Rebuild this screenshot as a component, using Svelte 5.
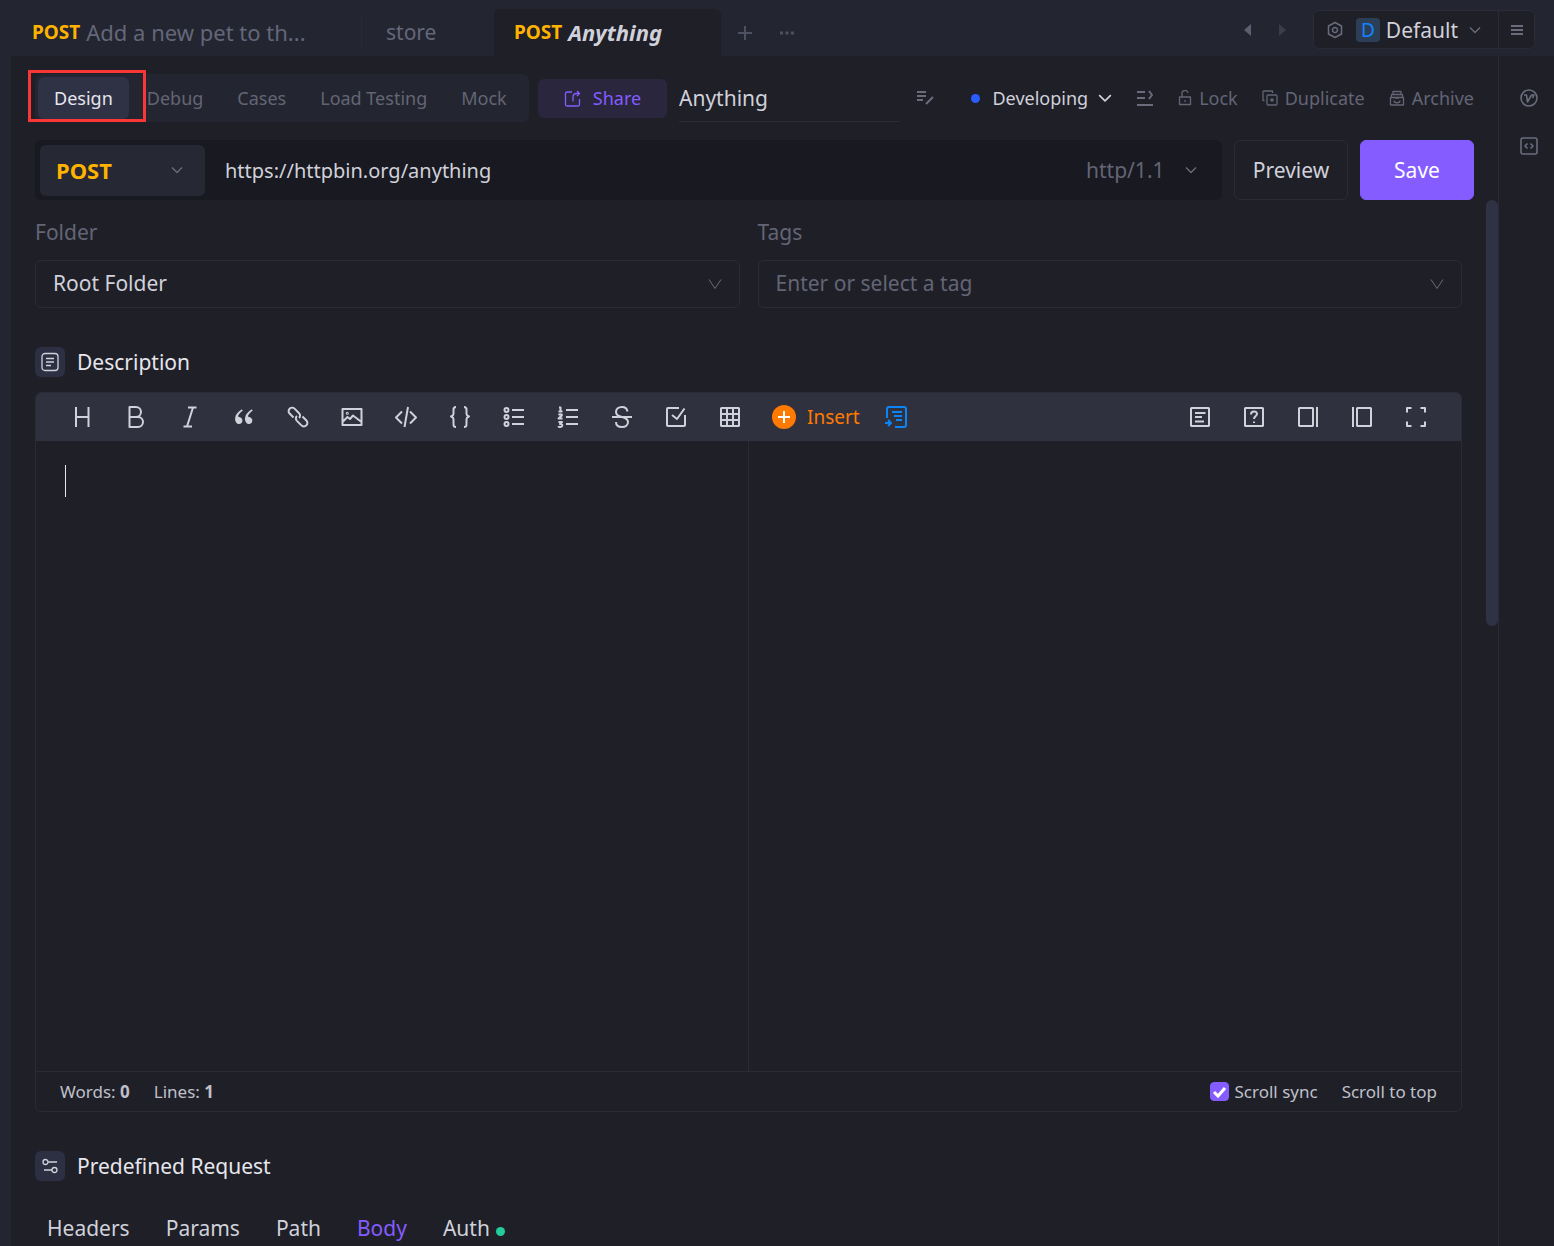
<script lang="ts">
	type Tool = { name: string; d: string; fill?: string };

	const modes = ['Design', 'Debug', 'Cases', 'Load Testing', 'Mock'];
	const requestTabs = ['Headers', 'Params', 'Path', 'Body', 'Auth'];

	let mode = $state('Design');
	let requestTab = $state('Body');
	let title = $state('Anything');
	let url = $state('https://httpbin.org/anything');
	let description = $state('');
	let scrollSync = $state(true);

	let words = $derived(description.trim() ? description.trim().split(/\s+/).length : 0);
	let lines = $derived(description.split('\n').length);

	const tools: Tool[] = [
		{ name: 'Heading', d: 'M12 4v40M37 4v40M12 24h25' },
		{
			name: 'Bold',
			d: 'M24 24c5.5 0 10-4.5 10-10S29.5 4 24 4H11v20h13ZM28 44c5.5 0 10-4.5 10-10s-4.5-10-10-10H11v20h17Z'
		},
		{ name: 'Italic', d: 'M20 5h17M11 43h17M30 5 18 43' },
		{
			name: 'Quote',
			d: '',
			fill: 'M18.9 9.1C11.3 13.9 7.1 19.6 6.3 26 5 36 13.9 40.9 18.5 36.5 23 32.1 20.3 26.5 17 25c-3.3-1.5-5.3-1-4.9-3 .3-2 5-7.7 9.1-10.4a.7.7 0 0 0 .1-1L20.3 9.3c-.4-.6-.9-.6-1.4-.2ZM38.7 9.1C31.1 13.9 27 19.6 26.1 26c-1.3 10 7.6 14.9 12.2 10.5C42.8 32.1 40.1 26.5 36.8 25c-3.3-1.5-5.3-1-4.9-3 .3-2 5-7.7 9.1-10.4a.7.7 0 0 0 .1-1L40.1 9.3c-.4-.6-.8-.6-1.4-.2Z'
		},
		{
			name: 'Link',
			d: 'm26.2 16.4-9.1-9.2c-2.7-2.6-7.1-2.6-9.8.2-2.7 2.7-2.8 7.1-.1 9.7l7.9 8M32.9 23l7.9 7.9c2.7 2.7 2.6 7.1-.1 9.8-2.7 2.7-7.1 2.8-9.8.1l-9.1-9.1M26.1 26.1c2.7-2.7 2.8-7.1.1-9.7M21.8 21.8c-2.7 2.7-2.8 7.1-.1 9.8'
		},
		{
			name: 'Image',
			d: 'M5 8h38v32H5ZM13.5 16.5a1 1 0 1 0 2 0 1 1 0 1 0-2 0M5 34l10-10 5 4 6-7 17 13'
		},
		{ name: 'Code', d: 'M16 13 4 25 16 37M32 13l12 12-12 12M28 4l-7 40' },
		{
			name: 'Code block',
			d: 'M16 4c-2 0-5 1-5 5v9c0 3-5 5-5 5s5 2 5 5v11c0 4 3 5 5 5M32 4c2 0 5 1 5 5v9c0 3 5 5 5 5s-5 2-5 5v11c0 4-3 5-5 5'
		},
		{
			name: 'Unordered list',
			d: 'M5 10a4 4 0 1 0 8 0 4 4 0 1 0-8 0M5 24a4 4 0 1 0 8 0 4 4 0 1 0-8 0M5 38a4 4 0 1 0 8 0 4 4 0 1 0-8 0M20 10h24M20 24h24M20 38h24'
		},
		{
			name: 'Ordered list',
			d: 'M6 5h3v8M5 13h8M5 20c2-2 7-2 7 0 0 3-6 4-7 7h8M5 34h7l-4 4c7 0 5 6 1 6-2 0-4-1-4-2M20 10h24M20 24h24M20 38h24'
		},
		{
			name: 'Strikethrough',
			d: 'M4 24h40M35 13c-1-6-5-9-11-9-7 0-12 4-12 10 0 5 3 8 12 10 8 2 12 5 12 10 0 6-5 10-12 10-8 0-12-4-12-10'
		},
		{ name: 'Task list', d: 'M42 20v20a2 2 0 0 1-2 2H8a2 2 0 0 1-2-2V8a2 2 0 0 1 2-2h22M16 20l10 8L41 7' },
		{ name: 'Table', d: 'M7 6h34l1 1v34l-1 1H7l-1-1V7ZM6 18h36M6 30h36M18 6v36M30 6v36' }
	];

	const viewTools: Tool[] = [
		{ name: 'Table of contents', d: 'M7 6h34l1 1v34l-1 1H7l-1-1V7ZM14 16h21M14 24h14M14 33h18' },
		{
			name: 'Help',
			d: 'M7 6h34l1 1v34l-1 1H7l-1-1V7ZM18 19c0-8 12-8 12-1 0 4-6 4-6 10M24 33v3'
		},
		{ name: 'Write only', d: 'M7 6h26l1 1v34l-1 1H7l-1-1V7ZM42 4v40' },
		{ name: 'Preview only', d: 'M15 6h26l1 1v34l-1 1H15l-1-1V7ZM6 4v40' },
		{ name: 'Fullscreen', d: 'M33 6h9v9M42 33v9h-9M15 42H6v-9M6 15V6h9' }
	];
</script>

{#snippet chevron(size: number)}
	<svg class="chevron" width={size} height={size} viewBox="0 0 12 12" stroke-width="1.4" aria-hidden="true">
		<path d="M1 3.5 6 8.5 11 3.5" />
	</svg>
{/snippet}

{#snippet caret()}
	<svg class="chevron" width="14" height="14" viewBox="0 0 14 14" aria-hidden="true">
		<path d="M1 2.5 7 11.5 13 2.5" />
	</svg>
{/snippet}

{#snippet tool(item: Tool)}
	<button class="tool" aria-label={item.name} title={item.name}>
		<svg width="24" height="24" viewBox="0 0 48 48" stroke-width="4">
			<path d={item.d} />
			{#if item.fill}
				<path class="solid" d={item.fill} />
			{/if}
		</svg>
	</button>
{/snippet}

<div class="app">
	<header>
		<nav class="file-tabs" aria-label="Open tabs">
			<button class="file-tab first"><b class="post">POST</b> Add a new pet to th...</button>
			<button class="file-tab store">store</button>
			<button class="file-tab current"><b class="post">POST</b> <b class="name">Anything</b></button>
			<div class="tab-tools">
				<button aria-label="New tab">
					<svg width="16" height="16" viewBox="0 0 16 16" stroke-width="2"><path d="M8 1v14M1 8h14" /></svg>
				</button>
				<button aria-label="More">
					<svg width="16" height="16" viewBox="0 0 16 16">
						<path class="solid" d="M1 6.5h3v3H1zM6.5 6.5h3v3h-3zM12 6.5h3v3h-3z" />
					</svg>
				</button>
			</div>
		</nav>
		<div class="history">
			<button aria-label="Back">
				<svg width="10" height="14" viewBox="0 0 10 14"><path class="solid" d="M1 7 8 1v12z" /></svg>
			</button>
			<button aria-label="Forward" disabled>
				<svg width="10" height="14" viewBox="0 0 10 14"><path class="solid" d="M9 7 2 1v12z" /></svg>
			</button>
		</div>
		<div class="environment">
			<button class="env-name">
				<svg width="18" height="18" viewBox="0 0 18 18" stroke-width="1.5"><path d="M9 1.5l6.5 3.5v8L9 16.500 2.500 13V5ZM6.500 9a2.500 2.500 0 1 0 5 0 2.500 2.500 0 1 0-5 0" /></svg>
				<span class="badge">D</span>
				<span>Default</span>
				{@render chevron(12)}
			</button>
			<button class="env-menu" aria-label="Environments">
				<svg width="12" height="12" viewBox="0 0 12 12" stroke-width="2"><path d="M0 2h12M0 6h12M0 10h12" /></svg>
			</button>
		</div>
	</header>

	<div class="workspace">
		<main>
			<div class="action-row">
				<div class="modes">
					{#each modes as item}
						<button class="mode" class:active={mode === item} onclick={() => (mode = item)}>{item}</button>
					{/each}
					<span class="highlight"></span>
				</div>
				<button class="share">
					<svg width="17" height="17" viewBox="0 0 17 17" stroke-width="1.3">
						<path d="M8 2H3a1.500 1.500 0 0 0-1.500 1.500v11A1.500 1.500 0 0 0 3 16h11a1.500 1.500 0 0 0 1.500-1.500V9M13 1l2.500 2.500L13 6M15 3.500h-2.500C10 3.500 9 5.500 9 7.500v4" />
					</svg>
					Share
				</button>
				<input class="title" aria-label="Name" bind:value={title} />
				<button class="icon edit" aria-label="Edit name">
					<svg width="20" height="16" viewBox="0 0 20 16" stroke-width="2"><path d="M2 2h9M2 6h9M2 10h6M18 7l-7 7" /></svg>
				</button>
				<div class="status-actions">
					<button class="status"><span class="dot"></span>Developing {@render chevron(14)}</button>
					<button class="icon" aria-label="Outline">
						<svg width="18" height="16" viewBox="0 0 18 16" stroke-width="2"><path d="M1 2h8M1 8h8M1 15h16M13 1l3 4-3 4" /></svg>
					</button>
					<button class="action">
						<svg width="14" height="16" viewBox="0 0 14 16" stroke-width="1.3"><path d="M1.500 7h11v7.500h-11zM4 7V4a3 3 0 0 1 6-1M7 10v2" /></svg>
						Lock
					</button>
					<button class="action">
						<svg width="16" height="16" viewBox="0 0 16 16" stroke-width="1.3"><path d="M6 5h8a1 1 0 0 1 1 1v8a1 1 0 0 1-1 1H6a1 1 0 0 1-1-1V6a1 1 0 0 1 1-1ZM2.500 10.500H1V2a1 1 0 0 1 1-1h8.500v2M10 8v4M8 10h4" /></svg>
						Duplicate
					</button>
					<button class="action">
						<svg width="16" height="16" viewBox="0 0 16 16" stroke-width="1.3"><path d="M1.500 7.500h13V15h-13ZM2.500 7V4.500h11V7M4 4V1.500h8V4M5 10.500c0 3 6 3 6 0M6 8h4" /></svg>
						Archive
					</button>
				</div>
			</div>

			<div class="url-row">
				<div class="url-box">
					<div class="picker method">
						<select aria-label="Method">
							<option>POST</option>
							<option>GET</option>
						</select>
						{@render chevron(12)}
					</div>
					<input class="url" aria-label="URL" bind:value={url} />
					<div class="picker protocol">
						<select aria-label="Protocol">
							<option>http/1.1</option>
							<option>http/2</option>
						</select>
						{@render chevron(12)}
					</div>
				</div>
				<button class="preview">Preview</button>
				<button class="save">Save</button>
			</div>

			<div class="scroller">
				<div class="content">
					<div class="fields">
						<div class="field">
							<label for="folder">Folder</label>
							<div class="picker boxed">
								<select id="folder"><option>Root Folder</option></select>
								{@render caret()}
							</div>
						</div>
						<div class="field">
							<label for="tags">Tags</label>
							<div class="picker boxed">
								<input id="tags" placeholder="Enter or select a tag" />
								{@render caret()}
							</div>
						</div>
					</div>

					<h2>
						<span class="heading-icon">
							<svg width="18" height="20" viewBox="0 0 18 20" stroke-width="1.3"><path d="M4 1.500h10a3 3 0 0 1 3 3v11a3 3 0 0 1-3 3H4a3 3 0 0 1-3-3v-11a3 3 0 0 1 3-3ZM5 6.500h8M5 10h8M5 13.500h5" /></svg>
						</span>
						Description
					</h2>

					<section class="editor">
						<div class="toolbar">
							{#each tools as item}
								{@render tool(item)}
							{/each}
							<button class="insert">
								<svg width="24" height="24" viewBox="0 0 24 24" stroke-width="2">
									<circle cx="12" cy="12" r="12" />
									<path d="M12 6v12M6 12h12" />
								</svg>
								Insert
							</button>
							<button class="tool format" aria-label="Format">
								<svg width="24" height="24" viewBox="0 0 24 24" stroke-width="2">
									<path d="M3 13V4a2 2 0 0 1 2-2h15a2 2 0 0 1 2 2v16a2 2 0 0 1-2 2h-9M8 7h10M10 11h8M12 15h6M1 18h6M4 15l3 3-3 3" />
								</svg>
							</button>
							<div class="view-tools">
								{#each viewTools as item}
									{@render tool(item)}
								{/each}
							</div>
						</div>
						<div class="panes">
							<div class="pane">
								<textarea aria-label="Description" bind:value={description}></textarea>
								<span class="caret"></span>
							</div>
							<div class="pane"></div>
						</div>
						<footer>
							<span>Words: <b>{words}</b></span>
							<span>Lines: <b>{lines}</b></span>
							<label class="sync"><input type="checkbox" bind:checked={scrollSync} />Scroll sync</label>
							<button>Scroll to top</button>
						</footer>
					</section>

					<h2>
						<span class="heading-icon">
							<svg width="16" height="16" viewBox="0 0 16 16" stroke-width="1.3"><path d="M1 4a2.500 2.500 0 1 0 5 0 2.500 2.500 0 1 0-5 0M6 4h9M10 12a2.500 2.500 0 1 0 5 0 2.500 2.500 0 1 0-5 0M10 12H2" /></svg>
						</span>
						Predefined Request
					</h2>

					<nav class="request-tabs">
						{#each requestTabs as item}
							<button class:active={requestTab === item} onclick={() => (requestTab = item)}>
								{item}
								{#if item === 'Auth'}<span class="dot"></span>{/if}
							</button>
						{/each}
					</nav>
				</div>
				<div class="scrollbar"></div>
			</div>
		</main>

		<aside>
			<button class="icon" aria-label="Validate">
				<svg width="20" height="20" viewBox="0 0 20 20" stroke-width="1.6"><circle cx="10" cy="10" r="8" /><path d="M5 7h2.500l1 7 4-7H15l-1.500 3" /></svg>
			</button>
			<button class="icon" aria-label="Generate code">
				<svg width="20" height="20" viewBox="0 0 20 20" stroke-width="1.6"><rect x="2" y="2" width="16" height="16" rx="2" /><path d="M8.500 7.500 6 10l2.500 2.500M11.500 7.500 14 10l-2.500 2.500" /></svg>
			</button>
		</aside>
	</div>
</div>

<style>
	:global(body) {
		margin: 0;
		background: #1f1f28;
	}

	.app {
		--bar: #232530;
		--panel: #1f1f28;
		--line: #2a2b37;
		--text: #d0d1da;
		--muted: #636575;
		--raised: #2f3144;
		--purple: #845cff;
		--post: #ffb300;
		display: flex;
		flex-direction: column;
		height: 100vh;
		overflow: hidden;
		background: var(--bar);
		color: var(--text);
		font-family: 'Noto Sans', 'Open Sans', sans-serif;
		font-size: 21px;
		line-height: 30px;
	}

	.app :global(*) {
		box-sizing: border-box;
	}

	button,
	input,
	select,
	textarea {
		margin: 0;
		padding: 0;
		border: 0;
		outline: 0;
		background: none;
		color: inherit;
		font: inherit;
		white-space: nowrap;
	}

	button {
		display: flex;
		align-items: center;
		cursor: pointer;
	}

	svg {
		flex: none;
		fill: none;
		stroke: currentColor;
		stroke-linejoin: round;
	}

	.solid {
		fill: currentColor;
		stroke: none;
	}

	header {
		display: flex;
		flex: none;
		align-items: center;
		height: 56px;
		padding: 3px 19px 0 0;
	}

	.file-tabs {
		display: flex;
		align-items: center;
		align-self: flex-end;
		height: 47px;
		color: #64677a;
		font-size: 22px;
	}

	.file-tab {
		height: 47px;
		gap: 6px;
		padding-bottom: 2px;
	}

	.first {
		width: 362px;
		padding-left: 32px;
		background: linear-gradient(var(--line), var(--line)) right center / 1px 32px no-repeat;
	}

	.store {
		width: 132px;
		padding-left: 24px;
		font-size: 21px;
	}

	.current {
		width: 227px;
		padding-left: 20px;
		border-radius: 6px 6px 0 0;
		background: var(--panel);
		color: var(--text);
	}

	.post {
		color: var(--post);
		font-size: 19px;
	}

	.name {
		font-style: italic;
	}

	.tab-tools {
		display: flex;
		gap: 26px;
		padding-left: 16px;
		color: #4d5061;
	}

	.history {
		display: flex;
		gap: 24px;
		margin: 0 26px 0 auto;
		color: #5d5f70;
	}

	.history button:disabled {
		color: #3b3d4b;
	}

	.environment {
		display: flex;
		height: 39px;
		border: 1px solid var(--line);
		border-radius: 6px;
		background: var(--panel);
	}

	.env-name {
		gap: 6px;
		padding: 0 17px 0 12px;
	}

	.env-name svg,
	.env-menu {
		color: #6a6c7c;
	}

	.badge {
		width: 24px;
		height: 24px;
		margin-left: 6px;
		border-radius: 4px;
		background: #2d3f56;
		color: #1283ff;
		font-size: 19px;
		line-height: 24px;
	}

	.env-name .chevron {
		margin-left: 5px;
	}

	.env-menu {
		width: 36px;
		justify-content: center;
		border-left: 1px solid var(--line);
	}

	.workspace {
		display: flex;
		flex: 1;
		min-height: 0;
		padding-left: 11px;
	}

	main {
		display: flex;
		flex: 1;
		flex-direction: column;
		min-width: 0;
		padding: 18px 0 0 24px;
		background: var(--panel);
	}

	aside {
		display: flex;
		flex: none;
		flex-direction: column;
		align-items: center;
		gap: 28px;
		width: 56px;
		padding: 32px 0 0 4px;
		border-left: 1px solid var(--line);
		background: var(--panel);
	}

	.icon {
		color: #6a6c7c;
	}

	.action-row {
		display: flex;
		align-items: center;
		height: 48px;
		padding-right: 24px;
		font-size: 18px;
	}

	.modes {
		position: relative;
		display: flex;
		gap: 2px;
		align-items: center;
		width: 494px;
		height: 48px;
		padding: 3px;
		border-radius: 6px;
		background: var(--bar);
		color: var(--muted);
	}

	.mode {
		height: 42px;
		padding: 0 16px;
		border-radius: 6px;
	}

	.mode.active {
		background: var(--raised);
		color: #e6e6ec;
	}

	.highlight {
		position: absolute;
		top: -4px;
		left: -7px;
		width: 118px;
		height: 52px;
		border: 3px solid #fb3636;
		pointer-events: none;
	}

	.share {
		justify-content: center;
		gap: 12px;
		width: 129px;
		height: 39px;
		margin-left: 9px;
		border-radius: 6px;
		background: #29263e;
		color: var(--purple);
	}

	.title {
		width: 221px;
		height: 48px;
		margin-left: 12px;
		border-bottom: 1px solid var(--line);
		font-size: 21px;
	}

	.edit {
		margin-left: 15px;
	}

	.status-actions {
		display: flex;
		align-items: center;
		gap: 24px;
		margin-left: auto;
	}

	.status {
		gap: 10px;
		color: var(--text);
	}

	.dot {
		width: 9px;
		height: 9px;
		border-radius: 50%;
		background: #2b5cff;
	}

	.status .dot {
		margin-right: 2px;
	}

	.action {
		gap: 7px;
		color: var(--muted);
	}

	.url-row {
		display: flex;
		flex: none;
		gap: 12px;
		height: 60px;
		margin-top: 18px;
		padding-right: 24px;
	}

	.url-box {
		display: flex;
		flex: 1;
		align-items: center;
		min-width: 0;
		padding: 0 5px;
		border-radius: 6px;
		background: #191921;
	}

	.url {
		flex: 1;
		min-width: 0;
		height: 50px;
		padding-left: 20px;
		font-size: 20px;
	}

	.picker {
		position: relative;
		display: flex;
		align-items: center;
	}

	.picker select {
		width: 100%;
		height: 100%;
		appearance: none;
	}

	.picker .chevron {
		position: absolute;
		right: 17px;
		color: #6a6c7c;
		pointer-events: none;
	}

	.method {
		width: 165px;
		height: 51px;
		border-radius: 6px;
		background: #262833;
		color: var(--post);
		font-size: 22px;
		font-weight: 700;
	}

	.method select {
		padding-left: 16px;
	}

	.method .chevron {
		right: 22px;
	}

	.protocol {
		width: 131px;
		height: 50px;
		color: var(--muted);
	}

	.protocol .chevron {
		right: 20px;
	}

	.preview,
	.save {
		justify-content: center;
		width: 114px;
		border: 1px solid var(--line);
		border-radius: 6px;
	}

	.save {
		border-color: var(--purple);
		background: var(--purple);
		color: #fff;
	}

	.scroller {
		display: flex;
		flex: 1;
		min-height: 0;
		overflow: hidden;
	}

	.content {
		flex: 1;
		min-width: 0;
		margin-right: 24px;
	}

	.scrollbar {
		width: 12px;
		height: 426px;
		border-radius: 6px;
		background: var(--raised);
	}

	.fields {
		display: flex;
		gap: 18px;
		padding-top: 17px;
	}

	.field {
		flex: 1;
	}

	.field label {
		display: block;
		color: var(--muted);
	}

	.boxed {
		height: 48px;
		margin-top: 13px;
		border: 1px solid var(--line);
		border-radius: 6px;
	}

	.boxed select,
	.boxed input {
		width: 100%;
		height: 100%;
		padding: 0 0 2px 17px;
	}

	.boxed input::placeholder {
		color: var(--muted);
		opacity: 1;
	}

	h2 {
		display: flex;
		align-items: center;
		gap: 12px;
		margin: 39px 0 15px;
		color: #e6e6ec;
		font-size: 21px;
		font-weight: 400;
		line-height: 30px;
	}

	.heading-icon {
		display: grid;
		place-items: center;
		width: 30px;
		height: 30px;
		border-radius: 6px;
		background: #2d2f42;
		color: #d0d1da;
	}

	.editor {
		overflow: hidden;
		border: 1px solid var(--line);
		border-radius: 6px;
	}

	.toolbar {
		display: flex;
		align-items: center;
		height: 48px;
		padding: 0 18px 0 19px;
		background: #30313e;
		color: #d0d1da;
	}

	.tool {
		justify-content: center;
		width: 54px;
		height: 48px;
	}

	.insert {
		gap: 11px;
		padding: 0 9px 0 15px;
		color: #ff7a00;
		font-size: 19px;
	}

	.insert circle {
		fill: #ff7a00;
		stroke: none;
	}

	.insert path {
		stroke: #fff;
	}

	.format {
		color: #0c84f5;
	}

	.view-tools {
		display: flex;
		margin-left: auto;
	}

	.panes {
		display: flex;
		height: 630px;
	}

	.pane {
		position: relative;
		flex: 1;
	}

	.pane:first-child {
		border-right: 1px solid var(--line);
	}

	textarea {
		display: block;
		width: 100%;
		height: 100%;
		padding: 24px 29px;
		resize: none;
	}

	.caret {
		position: absolute;
		top: 24px;
		left: 29px;
		width: 1px;
		height: 32px;
		background: #e6e6ec;
	}

	footer {
		display: flex;
		align-items: center;
		gap: 24px;
		height: 40px;
		padding: 0 24px;
		border-top: 1px solid var(--line);
		color: #bfc0ca;
		font-size: 17px;
	}

	.sync {
		display: flex;
		align-items: center;
		gap: 5px;
		margin-left: auto;
	}

	.sync input {
		width: 19px;
		height: 19px;
		border-radius: 4px;
		appearance: none;
		border: 1px solid var(--purple);
	}

	.sync input:checked {
		background: var(--purple)
			url("data:image/svg+xml,%3Csvg xmlns='http://www.w3.org/2000/svg' viewBox='0 0 19 19'%3E%3Cpath d='M4 10l4 4 7-8' fill='none' stroke='white' stroke-width='3'/%3E%3C/svg%3E")
			center / 19px 19px;
	}

	.request-tabs {
		display: flex;
		gap: 36px;
		padding: 17px 12px;
	}

	.request-tabs button {
		gap: 6px;
	}

	.request-tabs .active {
		color: var(--purple);
	}

	.request-tabs .dot {
		margin-top: 6px;
		background: #22cc9c;
	}
</style>
